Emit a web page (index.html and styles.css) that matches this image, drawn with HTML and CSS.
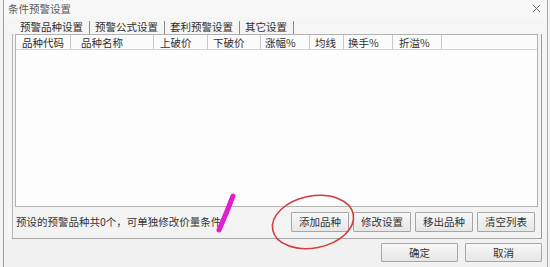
FILE: index.html
```html
<!DOCTYPE html>
<html lang="zh-CN">
<head>
<meta charset="utf-8">
<title>条件预警设置</title>
<link rel="stylesheet" href="styles.css">
</head>
<body>
<div class="window">
  <div class="titlebar">
    <span class="title">条件预警设置</span>
    <svg class="close" width="9" height="9" viewBox="0 0 9 9"><path d="M1 1L8 8M8 1L1 8" stroke="#6a6a6a" stroke-width="1"/></svg>
  </div>
  <div class="tabs">
    <span class="tab">预警品种设置</span>
    <span class="tab">预警公式设置</span>
    <span class="tab">套利预警设置</span>
    <span class="tab">其它设置</span>
  </div>
  <div class="panel">
    <div class="list">
      <div class="thead">
        <span class="th c1">品种代码</span>
        <span class="th c2">品种名称</span>
        <span class="th c3">上破价</span>
        <span class="th c4">下破价</span>
        <span class="th c5">涨幅%</span>
        <span class="th c6">均线</span>
        <span class="th c7">换手%</span>
        <span class="th c8">折溢%</span>
      </div>
    </div>
    <div class="status">
      <span class="note">预设的预警品种共0个，可单独修改价量条件</span>
      <div class="actions">
        <button class="btn">添加品种</button>
        <button class="btn">修改设置</button>
        <button class="btn">移出品种</button>
        <button class="btn">清空列表</button>
      </div>
    </div>
  </div>
  <div class="footer">
    <button class="btn big">确定</button>
    <button class="btn big">取消</button>
  </div>
</div>
<svg class="annot" width="550" height="267" viewBox="0 0 550 267">
  <ellipse cx="313" cy="222" rx="41" ry="26" transform="rotate(-11 313 222)" fill="none" stroke="#d23c3c" stroke-width="1.6"/>
  <path d="M233 196 Q227 212 219 230" fill="none" stroke="#e020d0" stroke-width="5" stroke-linecap="round"/>
</svg>
</body>
</html>
```

FILE: styles.css
```css
* { box-sizing: border-box; }
html, body {
  margin: 0;
  padding: 0;
  width: 550px;
  height: 267px;
  overflow: hidden;
  background: #f4f4f4;
  font-family: "Noto Sans CJK SC", "Noto Sans", sans-serif;
  font-size: 10.5px;
  color: #333;
}
.window {
  position: relative;
  margin-left: 3px;
  width: 545px;
  height: 267px;
  border-left: 1px solid #9c9c9c;
  border-right: 1px solid #a8a8a8;
  background: #f5f5f5;
  display: flex;
  flex-direction: column;
}
.titlebar {
  height: 17px;
  display: flex;
  align-items: center;
  padding: 0 6px 0 4px;
  background: #f8f8f8;
}
.title {
  color: #5a5a5a;
  line-height: 17px;
}
.close { margin-left: auto; margin-top: -1px; }
.tabs {
  height: 17px;
  display: flex;
  align-items: flex-end;
  padding-left: 16px;
}
.tab {
  height: 13px;
  line-height: 11px;
  padding-right: 6px;
  padding-bottom: 2px;
  margin-right: 5px;
  border-right: 1px solid #8a8a8a;
  color: #2e2e2e;
}
.panel {
  margin-left: 8px;
  width: 530px;
  height: 205px;
  border-left: 1px solid #b4b4b4;
  border-right: 1px solid #9a9a9a;
  border-bottom: 1px solid #a8a8a8;
  display: flex;
  flex-direction: column;
  background: #f3f3f3;
}
.list {
  margin-left: 2px;
  width: 523px;
  height: 173px;
  border: 1px solid #b2b2b2;
  background: #fdfdfd;
}
.thead {
  height: 15px;
  display: flex;
  border-bottom: 1px solid #d4d4d4;
  background: #fbfbfb;
}
.th {
  height: 14px;
  line-height: 13px;
  padding-top: 1px;
  padding-left: 6px;
  border-right: 1px solid #c8c8c8;
  white-space: nowrap;
  color: #2e2e2e;
}
.c1 { width: 55px; }
.c2 { width: 83px; padding-left: 10px; }
.c3 { width: 54px; }
.c4 { width: 53px; padding-left: 5px; }
.c5 { width: 49px; padding-left: 4px; }
.c6 { width: 34px; padding-left: 5px; }
.c7 { width: 49px; padding-left: 4px; }
.c8 { width: 49px; }
.status {
  flex: 1;
  display: flex;
  align-items: center;
  padding: 0 6px 2px 3px;
}
.note { white-space: nowrap; color: #333; }
.actions {
  margin-left: auto;
  display: flex;
  gap: 4px;
}
.btn {
  width: 58px;
  height: 20px;
  padding: 0;
  border: 1px solid #a6a6a6;
  border-radius: 1px;
  background: linear-gradient(#f8f8f8, #e6e6e6);
  font-family: inherit;
  font-size: 10.5px;
  color: #333;
  line-height: 18px;
}
.footer {
  flex: 1;
  display: flex;
  justify-content: flex-end;
  align-items: flex-start;
  gap: 7px;
  padding: 4px 5px 0 0;
  background: #f1f1f1;
}
.btn.big {
  width: 77px;
  height: 19px;
  line-height: 17px;
}
.annot {
  position: absolute;
  left: 0;
  top: 0;
  pointer-events: none;
}
```
